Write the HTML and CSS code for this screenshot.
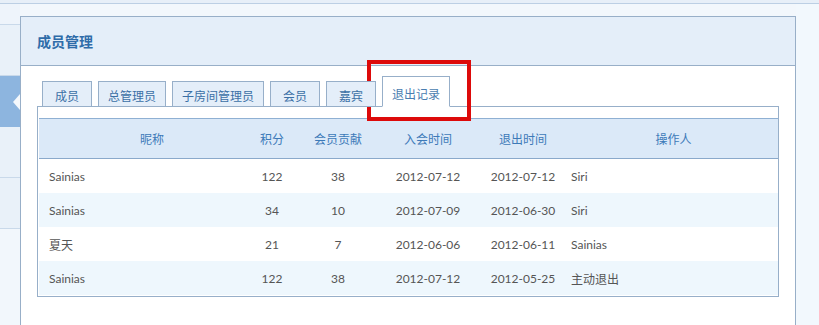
FILE: index.html
```html
<!DOCTYPE html>
<html lang="zh-CN">
<head>
<meta charset="utf-8">
<title>成员管理</title>
<link rel="stylesheet" href="styles.css">
</head>
<body>
<div class="topstrip"></div>
<div class="layout">
  <aside class="sidebar">
    <div class="side-item side-first"></div>
    <div class="side-item"></div>
    <div class="side-item side-active"><span class="notch"></span></div>
    <div class="side-item"></div>
    <div class="side-item"></div>
    <div class="side-rest"></div>
  </aside>
  <section class="panel">
    <header class="panel-head"><h2 class="panel-title">成员管理</h2></header>
    <div class="panel-body">
      <nav class="tabs">
        <span class="tab">成员</span>
        <span class="tab">总管理员</span>
        <span class="tab">子房间管理员</span>
        <span class="tab">会员</span>
        <span class="tab">嘉宾</span>
        <span class="tab tab-active">退出记录</span>
      </nav>
      <div class="tab-box">
        <table class="records">
          <colgroup>
            <col class="c1"><col class="c2"><col class="c3"><col class="c4"><col class="c5"><col class="c6">
          </colgroup>
          <thead>
            <tr>
              <th class="th-name">昵称</th><th>积分</th><th>会员贡献</th><th>入会时间</th><th>退出时间</th><th>操作人</th>
            </tr>
          </thead>
          <tbody>
            <tr><td class="left">Sainias</td><td>122</td><td>38</td><td>2012-07-12</td><td>2012-07-12</td><td class="left op">Siri</td></tr>
            <tr class="alt"><td class="left">Sainias</td><td>34</td><td>10</td><td>2012-07-09</td><td>2012-06-30</td><td class="left op">Siri</td></tr>
            <tr><td class="left">夏天</td><td>21</td><td>7</td><td>2012-06-06</td><td>2012-06-11</td><td class="left op">Sainias</td></tr>
            <tr class="alt"><td class="left">Sainias</td><td>122</td><td>38</td><td>2012-07-12</td><td>2012-05-25</td><td class="left op">主动退出</td></tr>
          </tbody>
        </table>
      </div>
    </div>
  </section>
  <div class="right-area"></div>
</div>
<div class="highlight"></div>
</body>
</html>
```
FILE: styles.css
```css
html, body {
  margin: 0;
  padding: 0;
}
body {
  width: 819px;
  height: 325px;
  overflow: hidden;
  background: #f2f7fc;
  font-family: Lato, "Noto Sans CJK SC", sans-serif;
  font-size: 12px;
  color: #555;
  position: relative;
}
.topstrip {
  height: 3px;
  background: #e7eff8;
  border-bottom: 1px solid #bccfe4;
}
.layout {
  display: flex;
  align-items: flex-start;
}
.sidebar {
  width: 20px;
  flex: none;
  display: flex;
  flex-direction: column;
}
.side-item {
  height: 50px;
  border-bottom: 1px solid #c9d9ea;
  background: #e9f1f9;
  position: relative;
}
.side-first {
  height: 20px;
  background: #eef4fb;
}
.side-active {
  background: #8db5df;
  border-bottom-color: #8db5df;
}
.notch {
  position: absolute;
  right: 0;
  top: 18px;
  width: 0;
  height: 0;
  border-top: 8px solid transparent;
  border-bottom: 8px solid transparent;
  border-right: 7px solid #f4f8fc;
}
.side-rest {
  height: 100px;
  background: #f2f7fc;
}
.panel {
  width: 776px;
  box-sizing: border-box;
  flex: none;
  margin-top: 12px;
  height: 320px;
  border: 1px solid #98afc8;
  border-bottom: none;
  background: #fff;
}
.panel-head {
  height: 48px;
  background: #e4eef9;
  border-bottom: 1px solid #98afc8;
  display: flex;
  align-items: center;
  padding-left: 16px;
}
.panel-title {
  margin: 0;
  font-family: "Noto Sans CJK SC", sans-serif;
  font-size: 14px;
  font-weight: bold;
  color: #2f6ca9;
  line-height: 18px;
}
.panel-body {
  padding: 10px 16px 0 16px;
}
.tabs {
  display: flex;
  align-items: flex-end;
  gap: 6px;
  padding-left: 5px;
  margin-bottom: -1px;
  position: relative;
  z-index: 1;
}
.tab {
  box-sizing: border-box;
  min-width: 50px;
  height: 26px;
  padding: 5px 9px 0;
  line-height: 18px;
  text-align: center;
  font-family: "Noto Sans CJK SC", sans-serif;
  font-size: 12px;
  color: #3b70a6;
  background: #e4eef9;
  border: 1px solid #97afc9;
}
.tab-active {
  height: 31px;
  padding-top: 8px;
  background: #fff;
  border-bottom-color: #fff;
  color: #4a7db0;
}
.tab-box {
  border: 1px solid #97afc9;
  padding: 11px 0 0 1px;
  height: 178px;
}
.records {
  width: 739px;
  border-collapse: collapse;
  table-layout: fixed;
}
.c1 { width: 208px; }
.c2 { width: 50px; }
.c3 { width: 82px; }
.c4 { width: 98px; }
.c5 { width: 92px; }
.c6 { width: 209px; }
.records thead tr {
  background: #dbe9f8;
  border-top: 1px solid #8fb0d3;
  border-bottom: 1px solid #8aa9cb;
}
.records th {
  height: 39px;
  padding: 0;
  font-family: "Noto Sans CJK SC", sans-serif;
  font-weight: normal;
  font-size: 12px;
  color: #3d7ab8;
  text-align: center;
}
.records th.th-name {
  padding-left: 18px;
}
.records td {
  height: 34px;
  padding: 0;
  text-align: center;
  font-family: Lato, "Noto Sans CJK SC", sans-serif;
  font-size: 12px;
  color: #555;
}
.records td.left {
  text-align: left;
  padding-left: 10px;
}
.records td.op {
  padding-left: 2px;
}
.records tr.alt {
  background: #eef7fd;
}
.right-area {
  flex: 1;
  height: 321px;
  background: #f2f8fd;
}
.highlight {
  position: absolute;
  left: 367px;
  top: 60px;
  width: 96px;
  height: 53px;
  border: 4px solid #dd0a0a;
}
```
